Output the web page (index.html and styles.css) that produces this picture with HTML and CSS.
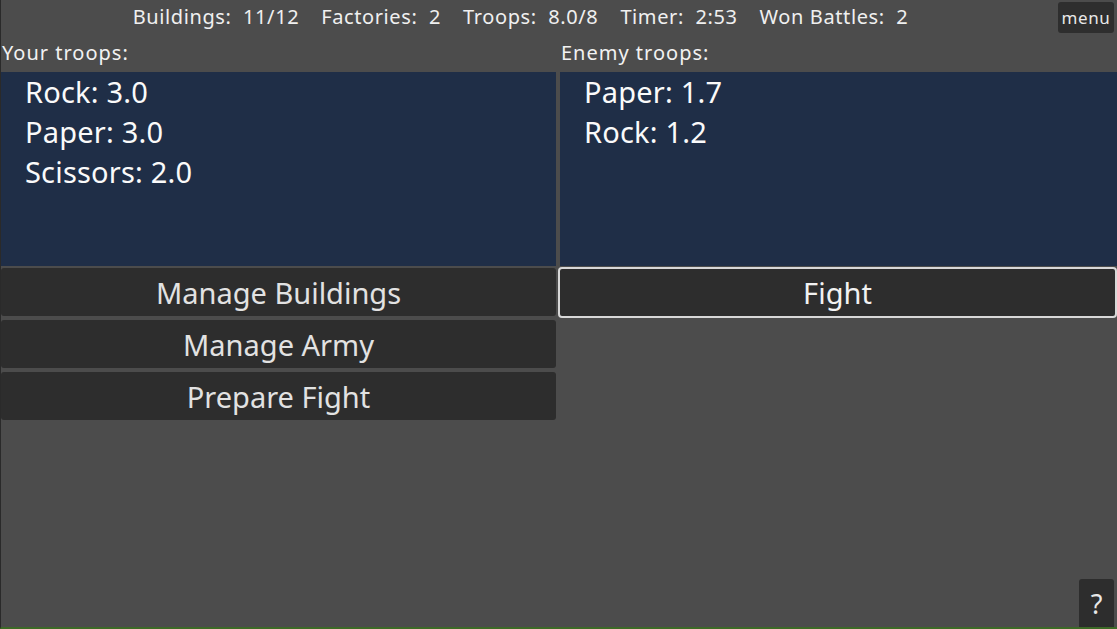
FILE: index.html
```html
<!DOCTYPE html>
<html lang="en">
<head>
  <meta charset="UTF-8" />
  <title>Rock Paper Scissors - Base</title>
  <link rel="stylesheet" href="styles.css">
</head>
<body>
  <div class="screen">
    <div class="topbar">
      <div class="status">
        <span>Buildings:&nbsp; 11/12</span>
        <span>Factories:&nbsp; 2</span>
        <span>Troops:&nbsp; 8.0/8</span>
        <span>Timer:&nbsp; 2:53</span>
        <span>Won Battles:&nbsp; 2</span>
      </div>
      <button class="menu-btn">menu</button>
    </div>

    <div class="board">
      <div class="label">Your troops:</div>
      <div class="label">Enemy troops:</div>

      <div class="troops">
        <div>Rock: 3.0</div>
        <div>Paper: 3.0</div>
        <div>Scissors: 2.0</div>
      </div>
      <div class="troops">
        <div>Paper: 1.7</div>
        <div>Rock: 1.2</div>
      </div>

      <div class="actions">
        <button class="action">Manage Buildings</button>
        <button class="action">Manage Army</button>
        <button class="action">Prepare Fight</button>
      </div>
      <div class="actions">
        <button class="action fight">Fight</button>
      </div>
    </div>

    <button class="help-btn">?</button>
  </div>
</body>
</html>
```

FILE: styles.css
```css
html, body {
  margin: 0;
  height: 100%;
}
body {
  background: #4c4c4c;
  font-family: "Noto Sans", "Open Sans", sans-serif;
  color: #f2f2f2;
  overflow: hidden;
}
.screen {
  height: 627px;
  border-left: 1px solid #2a2a2a;
  border-bottom: 2px solid #3d6a26;
  display: flex;
  flex-direction: column;
  position: relative;
}
button {
  font-family: inherit;
  border: none;
  cursor: pointer;
}

/* top status bar */
.topbar {
  height: 36px;
  display: flex;
  align-items: flex-start;
}
.status {
  flex: 1;
  display: flex;
  justify-content: center;
  gap: 22px;
  padding-right: 18px;
  font-size: 20px;
  letter-spacing: 0.6px;
  line-height: 36px;
  margin-top: -1px;
  color: #f0f0f0;
}
.menu-btn {
  margin: 2px 3px 0 0;
  width: 56px;
  height: 31px;
  border-radius: 3px;
  background: #2e2e2e;
  color: #e8e8e8;
  font-size: 17px;
  letter-spacing: 0.6px;
  padding: 0;
}

/* troops + actions */
.board {
  display: grid;
  grid-template-columns: 555px 557px;
  column-gap: 4px;
}
.label {
  font-size: 20px;
  letter-spacing: 1px;
  height: 36px;
  line-height: 34px;
  padding-left: 1px;
}
.troops {
  background: #1f2e47;
  height: 194px;
  padding: 0 0 0 24px;
  box-sizing: border-box;
  font-size: 29px;
  letter-spacing: 0.2px;
  line-height: 40px;
  color: #fafafa;
}
.actions {
  display: flex;
  flex-direction: column;
  gap: 4px;
  padding-top: 2px;
}
.action {
  height: 48px;
  background: #2d2d2d;
  color: #e2e2e2;
  font-size: 29px;
  border-radius: 3px;
  padding: 0;
}
.fight {
  height: 51px;
  margin: -1px 0 0 -2px;
  border: 2px solid #d8d8d8;
  border-radius: 4px;
  color: #f2f2f2;
}

.help-btn {
  position: absolute;
  right: 3px;
  bottom: 0;
  width: 35px;
  height: 48px;
  border-radius: 3px 3px 0 0;
  background: #2d2d2d;
  color: #e8e8e8;
  font-size: 27px;
  padding: 0;
}
```
